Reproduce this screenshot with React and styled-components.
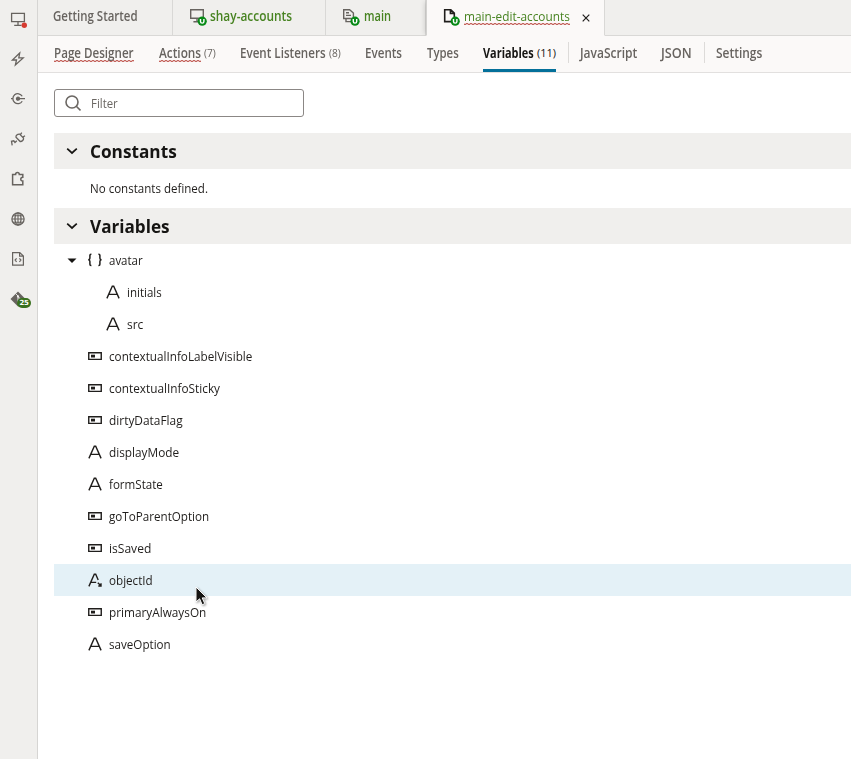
import React, { useLayoutEffect, useRef, useState } from "react";
import styled, { createGlobalStyle, css } from "styled-components";

const Global = createGlobalStyle`
  * { box-sizing: border-box; }
  html, body { margin: 0; height: 100%; overflow: hidden; background: #fff; }
  body { font-family: "Open Sans", "Noto Sans", sans-serif; font-size: 13.5px; color: #201e1c; }
`;

const Shell = styled.div`
  display: flex;
  height: 759px;
  width: 851px;
  overflow: hidden;
`;

const Sidebar = styled.nav`
  flex: 0 0 38px;
  display: flex;
  flex-direction: column;
  background: #f0efed;
  border-right: 1px solid #d6d5d3;
`;

const SidebarButton = styled.div`
  height: 40px;
  padding: 0 0 0 8px;
  display: flex;
  align-items: center;
  &:first-child { height: 39px; padding-bottom: 2px; }
`;

const Main = styled.main`
  flex: 1;
  min-width: 0;
  display: flex;
  flex-direction: column;
`;

const TabBar = styled.div`
  display: flex;
  height: 36px;
  background: #f0efed;
`;

const Tab = styled.div`
  width: ${(p) => p.$width}px;
  height: 36px;
  padding: 0 0 3px ${(p) => p.$pad}px;
  display: flex;
  align-items: center;
  color: ${(p) => (p.$plain ? "#67635f" : "#478321")};
  border-right: 1px solid #d9d8d6;
  border-bottom: 1px solid #d9d8d6;
  ${(p) =>
    p.$active &&
    css`
      background: #fbf9f8;
      border-bottom-color: #fbf9f8;
      border-left: 1px solid #d3d2d0;
      box-shadow: -3px 0 5px -2px rgba(0, 0, 0, 0.16);
    `}
`;

const TabRest = styled.div`
  flex: 1;
  border-bottom: 1px solid #d9d8d6;
`;

const TabIcon = styled.span`
  display: flex;
  width: ${(p) => p.$width}px;
  height: 20px;
  margin-top: 2px;
`;

const CloseIcon = styled.span`
  display: flex;
  margin-left: 11px;
  padding-top: 3px;
`;

const SubNav = styled.div`
  display: flex;
  height: 37px;
  padding-left: 16px;
  background: #fbf9f8;
  border-bottom: 1px solid #e2e0df;
`;

const NavItem = styled.div`
  height: 36px;
  margin-right: ${(p) => p.$gap}px;
  padding-bottom: ${(p) => (p.$active ? 0 : 3)}px;
  display: flex;
  align-items: center;
  gap: 3px;
  color: ${(p) => (p.$active ? "#161513" : "#67635f")};
  border-bottom: ${(p) => (p.$active ? "3px solid #04709a" : "0")};
`;

const Divider = styled.div`
  width: 1px;
  height: 21px;
  margin: 6px 11px 0 0;
  background: #dddbd9;
`;

const Word = styled.span`
  display: inline-block;
  flex: none;
  width: ${(p) => p.$width}px;
  height: 20px;
  line-height: 20px;
  font-size: ${(p) => p.$size}px;
  font-weight: ${(p) => p.$weight};
  white-space: nowrap;
  ${(p) =>
    p.$squiggle &&
    css`
      background: repeating-linear-gradient(90deg, #c4635c 0 2px, transparent 2px 4px) 0 18px / 100% 1px no-repeat,
        repeating-linear-gradient(90deg, transparent 0 2px, #c4635c 2px 4px) 0 17px / 100% 1px no-repeat,
        linear-gradient(rgba(196, 99, 92, 0.35), rgba(196, 99, 92, 0.35)) 0 17px / 100% 2px no-repeat;
    `}
`;

const WordInner = styled.span`
  display: inline-block;
  transform-origin: 0 50%;
`;

function Text({ children, width, size = 13.5, weight = 400, squiggle }) {
  const ref = useRef(null);
  const [scale, setScale] = useState(1);
  useLayoutEffect(() => {
    setScale(width / ref.current.offsetWidth);
  }, [width, children]);
  return (
    <Word $width={width} $size={size} $weight={weight} $squiggle={squiggle}>
      <WordInner ref={ref} style={{ transform: `scaleX(${scale})` }}>{children}</WordInner>
    </Word>
  );
}

const Content = styled.section`
  padding: 16px 0 0 16px;
`;

const Filter = styled.div`
  width: 250px;
  height: 28px;
  padding-left: 10px;
  display: flex;
  align-items: center;
  gap: 10px;
  border: 1px solid #8b8785;
  border-radius: 3px;
  color: #6b6763;
  margin-bottom: 16px;
`;

const SectionHead = styled.header`
  height: 36px;
  padding-left: 12px;
  display: flex;
  align-items: center;
  gap: 12px;
  color: #161513;
  background: #f0efed;
`;

const Empty = styled.div`
  height: 39px;
  padding: 0 0 1px 36px;
  display: flex;
  align-items: center;
`;

const Row = styled.div`
  position: relative;
  height: 32px;
  padding: 0 0 0 ${(p) => (p.$nested ? 51 : 33)}px;
  display: flex;
  align-items: center;
  background: ${(p) => (p.$hover ? "#e4f1f7" : "transparent")};
`;

const Caret = styled.span`
  display: flex;
  width: 20px;
  margin-left: -20px;
  padding-top: 1px;
`;

const TypeIcon = styled.span`
  display: flex;
  width: 22px;
`;

const Pointer = styled.svg`
  position: absolute;
  left: 141px;
  top: 22px;
  z-index: 2;
  filter: drop-shadow(1px 1px 1px rgba(0, 0, 0, 0.4));
`;

const Svg = ({ w = 20, h = 20, sw = 1.4, children }) => (
  <svg width={w} height={h} viewBox={`0 0 ${w} ${h}`} fill="none" stroke="currentColor" strokeWidth={sw}>
    {children}
  </svg>
);

const RailSvg = styled.svg`
  color: #67635f;
  overflow: visible;
`;

const Rail = ({ children }) => (
  <RailSvg width="20" height="20" viewBox="0 0 20 20" fill="none" stroke="currentColor" strokeWidth="1.3">
    {children}
  </RailSvg>
);

const rail = [
  <Rail key="monitor">
    <path d="M3.6 4.3H16.4V12.6H3.6ZM10 12.6V16.2M6.2 16.4H13.5" />
    <circle cx="16.3" cy="16.3" r="2.7" fill="#d63b31" stroke="none" />
  </Rail>,
  <Rail key="bolt">
    <path d="M11.7 4L4.4 11H8.5L7.4 16L15.2 8.9H10.8Z" />
  </Rail>,
  <Rail key="service">
    <path d="M14.2 7.2A5 5 0 1 0 14.2 12.2M3 9.7H5.2M10 9.7H17" />
    <circle cx="10" cy="9.7" r="1.5" fill="currentColor" />
  </Rail>,
  <Rail key="plug">
    <path d="M8 8.3L12.2 12.5C14.2 12.6 15.8 11 15.5 9L11.6 5.1C9.4 4.9 7.6 6.4 8 8.3ZM12.4 5.7L13.8 3.6M14.8 8.1L17 6.8M8.8 11.8L7 13.5L5.8 11.8L3.5 12.2L4.2 16.4" />
  </Rail>,
  <Rail key="puzzle">
    <path d="M4.6 5.4H7.6C7.6 3 11.3 3 11.3 5.4H14.8V8.3C12.1 8.2 12.1 12.2 14.8 12.1V15.8H4.6Z" strokeWidth="1.5" />
  </Rail>,
  <Rail key="globe">
    <circle cx="10" cy="10" r="6.1" />
    <ellipse cx="10" cy="10" rx="3" ry="6.1" />
    <path d="M10 3.9V16.1M4 10H16M5 6.8H15M5 13.2H15" strokeWidth="1.1" />
  </Rail>,
  <Rail key="source">
    <path d="M4.6 3.6H11.8L15.4 7V16.2H4.6ZM11.6 3.6V7.2H15.4M8.6 9.4L7.1 11.1L8.6 12.8M11.4 9.4L12.9 11.1L11.4 12.8" strokeWidth="1.2" />
  </Rail>,
];

const GitWrap = styled.div`
  position: relative;
  display: flex;
`;

const Count = styled.span`
  position: absolute;
  left: 9px;
  top: 9px;
  width: 14px;
  height: 10px;
  border-radius: 5px;
  background: #39701f;
  color: #fff;
  font: 700 7px/10px "DejaVu Sans", sans-serif;
  letter-spacing: -0.3px;
  text-align: center;
`;

const Badge = ({ x, y }) => (
  <g>
    <circle cx={x} cy={y} r="4.6" fill="#078a16" stroke="none" />
    <path d={`M${x - 1.7} ${y - 2.3}v2.6q0 1.6 1.7 1.6t1.7 -1.6v-2.6`} stroke="#fff" strokeWidth="1.4" />
  </g>
);

const MonitorTab = () => (
  <Svg>
    <path d="M1.7 2.7H14.3V11.3H1.7ZM8 11.3V14.7M4.4 14.7H9" stroke="#67635f" />
    <Badge x={13.2} y={14.2} />
  </Svg>
);
const FlowTab = () => (
  <Svg>
    <path d="M1.7 2.7H7.6L11.4 6V11.5H1.7ZM4 5.8H7M4 8.4H9M4 11.5V14.6H9" stroke="#67635f" />
    <Badge x={13} y={14.2} />
  </Svg>
);
const PageTab = () => (
  <Svg>
    <path d="M9 14.6H1.7V2.8H7.8L11.3 6.2V11M7.4 2.8V6.4H11.3" stroke="#201e1c" strokeWidth="1.6" />
    <Badge x={12.2} y={14.2} />
  </Svg>
);

const Chevron = () => (
  <Svg w={12} h={8} sw={1.7}><path d="M1.2 1.7L6 6L10.8 1.7" /></Svg>
);

const LetterA = () => (
  <Svg w={16} h={16} sw={1.4}><path d="M1.9 14.4L7.3 2.2H8.7L14.1 14.4M4.2 10.4H11.8" /></Svg>
);
const LetterARef = () => (
  <Svg w={16} h={16} sw={1.4}>
    <path d="M1.9 14.4L7.3 2.2H8.7L11.2 8M4.2 10.4H9.2" />
    <path d="M10.8 10.8L13.6 13.6M14 11.3V14H11.3" />
  </Svg>
);
const Bool = () => (
  <Svg w={16} h={16} sw={1.4}>
    <path d="M1.75 4.75H14.25V11.35H1.75Z" />
    <rect x="4" y="6.7" width="4" height="2.8" fill="currentColor" stroke="none" />
  </Svg>
);
const Braces = () => (
  <Svg w={16} h={16} sw={1.5}>
    <path d="M4.4 2.2H4Q2.9 2.2 2.9 3.4V6.2Q2.9 7.6 1.3 7.8Q2.9 8 2.9 9.4V12.2Q2.9 13.4 4 13.4H4.4M11.4 2.2H11.8Q12.9 2.2 12.9 3.4V6.2Q12.9 7.6 14.5 7.8Q12.9 8 12.9 9.4V12.2Q12.9 13.4 11.8 13.4H11.4" />
  </Svg>
);

const icons = { string: LetterA, ref: LetterARef, bool: Bool, object: Braces };

const variables = [
  { name: "avatar", type: "object", width: 34, open: true },
  { name: "initials", type: "string", width: 35, nested: true },
  { name: "src", type: "string", width: 16, nested: true },
  { name: "contextualInfoLabelVisible", type: "bool", width: 143 },
  { name: "contextualInfoSticky", type: "bool", width: 111 },
  { name: "dirtyDataFlag", type: "bool", width: 74 },
  { name: "displayMode", type: "string", width: 70 },
  { name: "formState", type: "string", width: 54 },
  { name: "goToParentOption", type: "bool", width: 100 },
  { name: "isSaved", type: "bool", width: 42 },
  { name: "objectId", type: "ref", width: 44, hover: true },
  { name: "primaryAlwaysOn", type: "bool", width: 97 },
  { name: "saveOption", type: "string", width: 62 },
];

const nav = [
  { label: "Page Designer", width: 80, gap: 25, squiggle: true },
  { label: "Actions", width: 42, count: "(7)", countWidth: 12, gap: 24, squiggle: true },
  { label: "Event Listeners", width: 86, count: "(8)", countWidth: 12, gap: 24 },
  { label: "Events", width: 37, gap: 25 },
  { label: "Types", width: 32, gap: 24 },
  { label: "Variables", width: 51, count: "(11)", countWidth: 19, gap: 12, active: true, divider: true },
  { label: "JavaScript", width: 57, gap: 24 },
  { label: "JSON", width: 31, gap: 12, divider: true },
  { label: "Settings", width: 46, gap: 0 },
];

export default function App() {
  return (
    <Shell>
      <Global />
      <Sidebar>
        {rail.map((icon) => <SidebarButton key={icon.key}>{icon}</SidebarButton>)}
        <SidebarButton>
          <GitWrap>
            <Rail>
              <path d="M10 2.5L17.5 10L10 17.5L2.5 10Z" fill="#67635f" stroke="none" />
              <path d="M7.6 4.5L10 7V14M10 7.5L13 10.5" stroke="#f0efed" strokeWidth="1" />
              <circle cx="10" cy="7.4" r="1.1" fill="#f0efed" stroke="none" />
            </Rail>
            <Count>25</Count>
          </GitWrap>
        </SidebarButton>
      </Sidebar>
      <Main>
        <TabBar>
          <Tab $width={135} $pad={15} $plain><Text width={85} weight={550}>Getting Started</Text></Tab>
          <Tab $width={153} $pad={16}><TabIcon $width={21}><MonitorTab /></TabIcon><Text width={82} weight={600}>shay-accounts</Text></Tab>
          <Tab $width={100} $pad={16}><TabIcon $width={22}><FlowTab /></TabIcon><Text width={27} weight={600}>main</Text></Tab>
          <Tab $width={179} $pad={16} $active>
            <TabIcon $width={21}><PageTab /></TabIcon>
            <Text width={106} squiggle>main-edit-accounts</Text>
            <CloseIcon><Svg w={10} h={10} sw={1.2}><path d="M1.7 1.7L8.3 8.3M8.3 1.7L1.7 8.3" stroke="#201e1c" /></Svg></CloseIcon>
          </Tab>
          <TabRest />
        </TabBar>
        <SubNav>
          {nav.map((n) => (
            <React.Fragment key={n.label}>
              <NavItem $gap={n.gap} $active={n.active}>
                <Text width={n.width} weight={n.active ? 700 : 600} squiggle={n.squiggle}>{n.label}</Text>
                {n.count && <Text width={n.countWidth} size={11} weight={500}>{n.count}</Text>}
              </NavItem>
              {n.divider && <Divider />}
            </React.Fragment>
          ))}
        </SubNav>
        <Content>
          <Filter>
            <Svg w={16} h={18} sw={1.6}><circle cx="7" cy="8" r="6" /><path d="M11.3 12.3L15.5 16.5" /></Svg>
            <Text width={27}>Filter</Text>
          </Filter>
          <SectionHead><Chevron /><Text width={87} size={18} weight={700}>Constants</Text></SectionHead>
          <Empty><Text width={118}>No constants defined.</Text></Empty>
          <SectionHead><Chevron /><Text width={80} size={18} weight={700}>Variables</Text></SectionHead>
          {variables.map((v) => {
            const Icon = icons[v.type];
            return (
              <Row key={v.name} $nested={v.nested} $hover={v.hover}>
                {v.open && <Caret><svg width="10" height="6" viewBox="0 0 10 6"><path d="M0.5 0.5H9.5L5 5Z" fill="#161513" /></svg></Caret>}
                <TypeIcon><Icon /></TypeIcon>
                <Text width={v.width}>{v.name}</Text>
                {v.hover && (
                  <Pointer width="14" height="21" viewBox="0 0 14 21">
                    <path d="M1 1V16L4.6 12.8L7.2 18.8L9.8 17.6L7.2 11.9H12Z" fill="#161513" stroke="#fff" strokeWidth="1" />
                  </Pointer>
                )}
              </Row>
            );
          })}
        </Content>
      </Main>
    </Shell>
  );
}
